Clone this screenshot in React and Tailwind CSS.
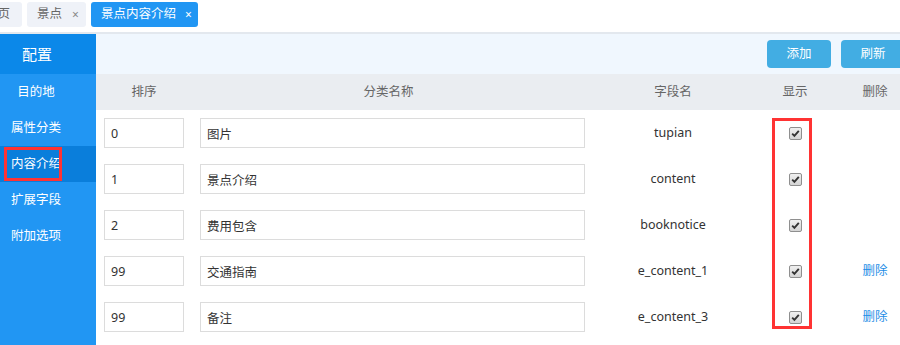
import React from 'react';

const menus = ['目的地', '属性分类', '内容介绍', '扩展字段', '附加选项'];

const rows = [
    { sort: '0', name: '图片', field: 'tupian', del: false },
    { sort: '1', name: '景点介绍', field: 'content', del: false },
    { sort: '2', name: '费用包含', field: 'booknotice', del: false },
    { sort: '99', name: '交通指南', field: 'e_content_1', del: true },
    { sort: '99', name: '备注', field: 'e_content_3', del: true },
];

const CheckBox = () => (
    <span className="inline-flex h-[13px] w-[13px] items-center justify-center rounded-[2px] border border-[#8f8f8f] bg-gradient-to-b from-[#f0f0f0] to-[#d4d4d4]">
        <svg width="9" height="9" viewBox="0 0 9 9">
            <path d="M1.2 4.6 L3.4 6.8 L7.8 1.8" fill="none" stroke="#333" strokeWidth="1.9" />
        </svg>
    </span>
);

const App = () => {
    return (
        <div
            className="w-[900px] h-[345px] overflow-hidden bg-white text-[12.5px] text-[#333]"
            style={{ fontFamily: '"Noto Sans", "Noto Sans CJK SC", sans-serif' }}
        >
            {/* 标签栏 */}
            <div className="flex h-[34px] items-start gap-[5px] border-b-2 border-[#e3e8ee] pt-[2px]">
                <div className="-ml-[14px] flex h-[25px] w-[36px] items-center justify-end rounded-[3px] bg-[#eff2f8] pr-[12px] text-[#666]">
                    页
                </div>
                <div className="flex h-[25px] w-[59px] items-center rounded-[3px] bg-[#eff2f8] pl-[10px] text-[#666]">
                    <span>景点</span>
                    <span className="ml-[10px] text-[12px] text-[#888]">×</span>
                </div>
                <div className="flex h-[25px] w-[107px] items-center rounded-[3px] bg-[#2196f3] pl-[10px] text-white">
                    <span>景点内容介绍</span>
                    <span className="ml-[9px] text-[12px]">×</span>
                </div>
            </div>

            <div className="flex h-[311px]">
                {/* 侧边栏 */}
                <div className="w-[96px] shrink-0 bg-[#2196f3] text-white">
                    <div className="flex h-[40px] items-center justify-center bg-[#0b88e9] pr-[22px] text-[15px]">
                        配置
                    </div>
                    {menus.map((m) => (
                        <div
                            key={m}
                            className={
                                m === '内容介绍'
                                    ? 'relative flex h-[36px] items-center justify-center bg-[#0a7edb] pr-[24px]'
                                    : 'flex h-[36px] items-center justify-center pr-[24px]'
                            }
                        >
                            {m}
                            {m === '内容介绍' && (
                                <div className="absolute left-[4px] top-[1px] h-[34px] w-[58px] border-[3px] border-[#f33]" />
                            )}
                        </div>
                    ))}
                </div>

                {/* 主体 */}
                <div className="relative w-[817px] shrink-0">
                    <div className="flex h-[40px] items-start justify-end gap-[10px] bg-[#f0f7fe] pr-[8px] pt-[6px]">
                        <button className="h-[28px] w-[64px] rounded-[4px] bg-[#42ade3] text-white">添加</button>
                        <button className="h-[28px] w-[64px] rounded-[4px] bg-[#42ade3] text-white">刷新</button>
                    </div>

                    <div className="flex h-[36px] items-center bg-[#eaedf1] text-[#666]">
                        <div className="w-[96px] text-center">排序</div>
                        <div className="w-[401px] pr-[8px] text-center">分类名称</div>
                        <div className="w-[160px] text-center">字段名</div>
                        <div className="w-[84px] text-center">显示</div>
                        <div className="w-[76px] text-center">删除</div>
                    </div>

                    {rows.map((r, i) => (
                        <div key={i} className="flex h-[46px] items-center">
                            <div className="w-[96px] pl-[8px]">
                                <input
                                    className="h-[30px] w-[80px] border border-[#dcdcdc] px-[6px] outline-none"
                                    defaultValue={r.sort}
                                />
                            </div>
                            <div className="w-[401px] pl-[8px]">
                                <input
                                    className="h-[30px] w-[385px] border border-[#dcdcdc] px-[6px] outline-none"
                                    defaultValue={r.name}
                                />
                            </div>
                            <div className="w-[160px] text-center">{r.field}</div>
                            <div className="flex w-[84px] justify-center">
                                <CheckBox />
                            </div>
                            <div className="w-[76px] text-center text-[#1e8ee6]">{r.del ? '删除' : ''}</div>
                        </div>
                    ))}

                    <div className="absolute left-[676px] top-[84px] h-[211px] w-[40px] border-[3px] border-[#f33]" />
                </div>
            </div>
        </div>
    );
};

export default App;
